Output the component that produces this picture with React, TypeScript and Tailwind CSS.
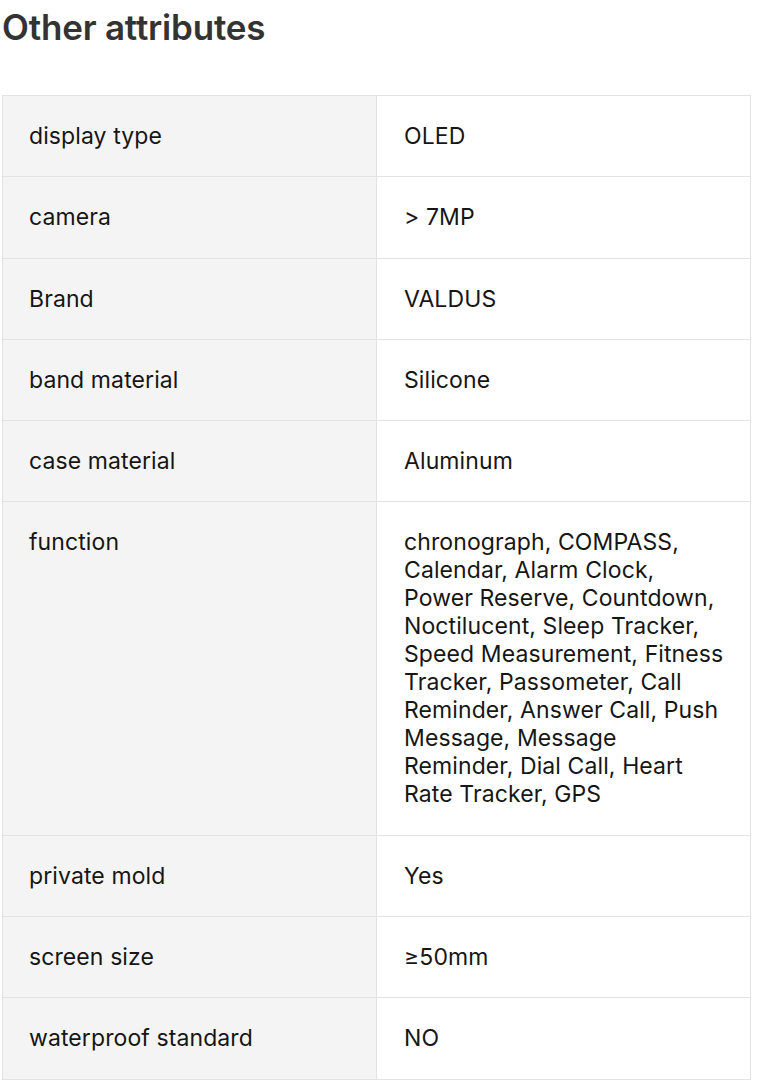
const rows: [string, string][] = [
  ["display type", "OLED"],
  ["camera", "> 7MP"],
  ["Brand", "VALDUS"],
  ["band material", "Silicone"],
  ["case material", "Aluminum"],
  [
    "function",
    "chronograph, COMPASS, Calendar, Alarm Clock, Power Reserve, Countdown, Noctilucent, Sleep Tracker, Speed Measurement, Fitness Tracker, Passometer, Call Reminder, Answer Call, Push Message, Message Reminder, Dial Call, Heart Rate Tracker, GPS",
  ],
  ["private mold", "Yes"],
  ["screen size", "≥50mm"],
  ["waterproof standard", "NO"],
];

export default function App() {
  return (
    <div
      className="w-[757px] min-h-[1080px] bg-white text-[#161616] overflow-hidden"
      style={{ fontFamily: "Inter, 'Liberation Sans', sans-serif" }}
    >
      <h2 className="pl-[2px] pt-[7px] text-[35px] leading-[40px] font-semibold text-[#333] tracking-[-0.2px]">
        Other attributes
      </h2>
      <table className="ml-[2px] mt-[48px] w-[749px] border-collapse table-fixed text-[23px] leading-[28px] tracking-[0.1px]">
        <tbody>
          {rows.map(([k, v]) => (
            <tr key={k}>
              <td className="w-[374px] align-top bg-[#f4f4f4] border border-[#e3e3e3] pl-[26px] pr-4 pt-[26px] pb-[26.3px]">
                {k}
              </td>
              <td className="align-top bg-white border border-[#e3e3e3] pl-[27px] pr-[24px] pt-[26px] pb-[26.3px]">
                {v}
              </td>
            </tr>
          ))}
        </tbody>
      </table>
    </div>
  );
}
